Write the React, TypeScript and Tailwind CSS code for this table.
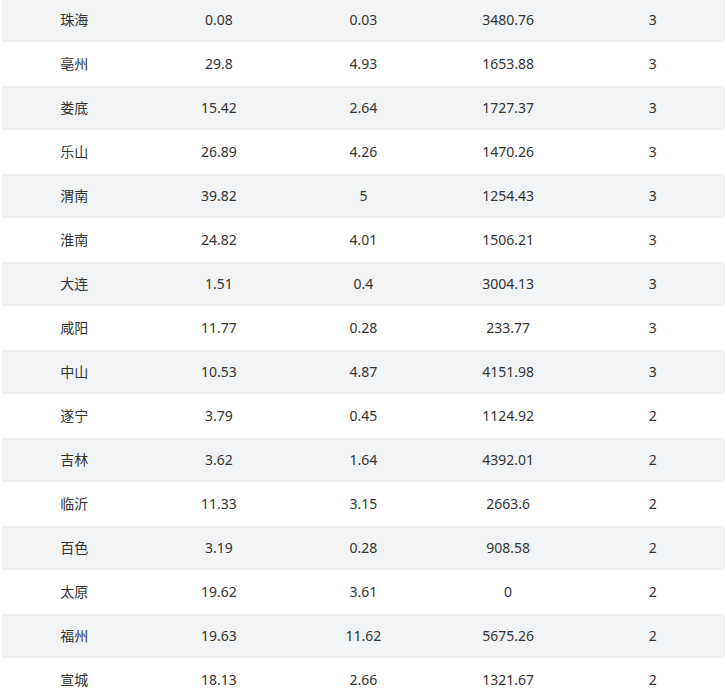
const rows: [string, string, string, string, string][] = [
  ['珠海', '0.08', '0.03', '3480.76', '3'],
  ['亳州', '29.8', '4.93', '1653.88', '3'],
  ['娄底', '15.42', '2.64', '1727.37', '3'],
  ['乐山', '26.89', '4.26', '1470.26', '3'],
  ['渭南', '39.82', '5', '1254.43', '3'],
  ['淮南', '24.82', '4.01', '1506.21', '3'],
  ['大连', '1.51', '0.4', '3004.13', '3'],
  ['咸阳', '11.77', '0.28', '233.77', '3'],
  ['中山', '10.53', '4.87', '4151.98', '3'],
  ['遂宁', '3.79', '0.45', '1124.92', '2'],
  ['吉林', '3.62', '1.64', '4392.01', '2'],
  ['临沂', '11.33', '3.15', '2663.6', '2'],
  ['百色', '3.19', '0.28', '908.58', '2'],
  ['太原', '19.62', '3.61', '0', '2'],
  ['福州', '19.63', '11.62', '5675.26', '2'],
  ['宣城', '18.13', '2.66', '1321.67', '2'],
]

export default function App() {
  return (
    <div className="w-[728px] h-[698px] overflow-hidden bg-white pl-[2px]">
      <table
        className="w-[723px] -mt-[2px] table-fixed border-collapse text-[14px] text-[#333333]"
        style={{ fontFamily: '"Segoe UI", "Noto Sans", "Noto Sans CJK SC", sans-serif' }}
      >
        <tbody>
          {rows.map((r, i) => (
            <tr key={i} className={i % 2 === 0 ? 'h-[44px] bg-[#f2f3f5]' : 'h-[44px] bg-white'}>
              {r.map((c, j) => (
                <td key={j} className="p-0 pb-[2px] text-center align-middle">
                  {c}
                </td>
              ))}
            </tr>
          ))}
        </tbody>
      </table>
    </div>
  )
}
